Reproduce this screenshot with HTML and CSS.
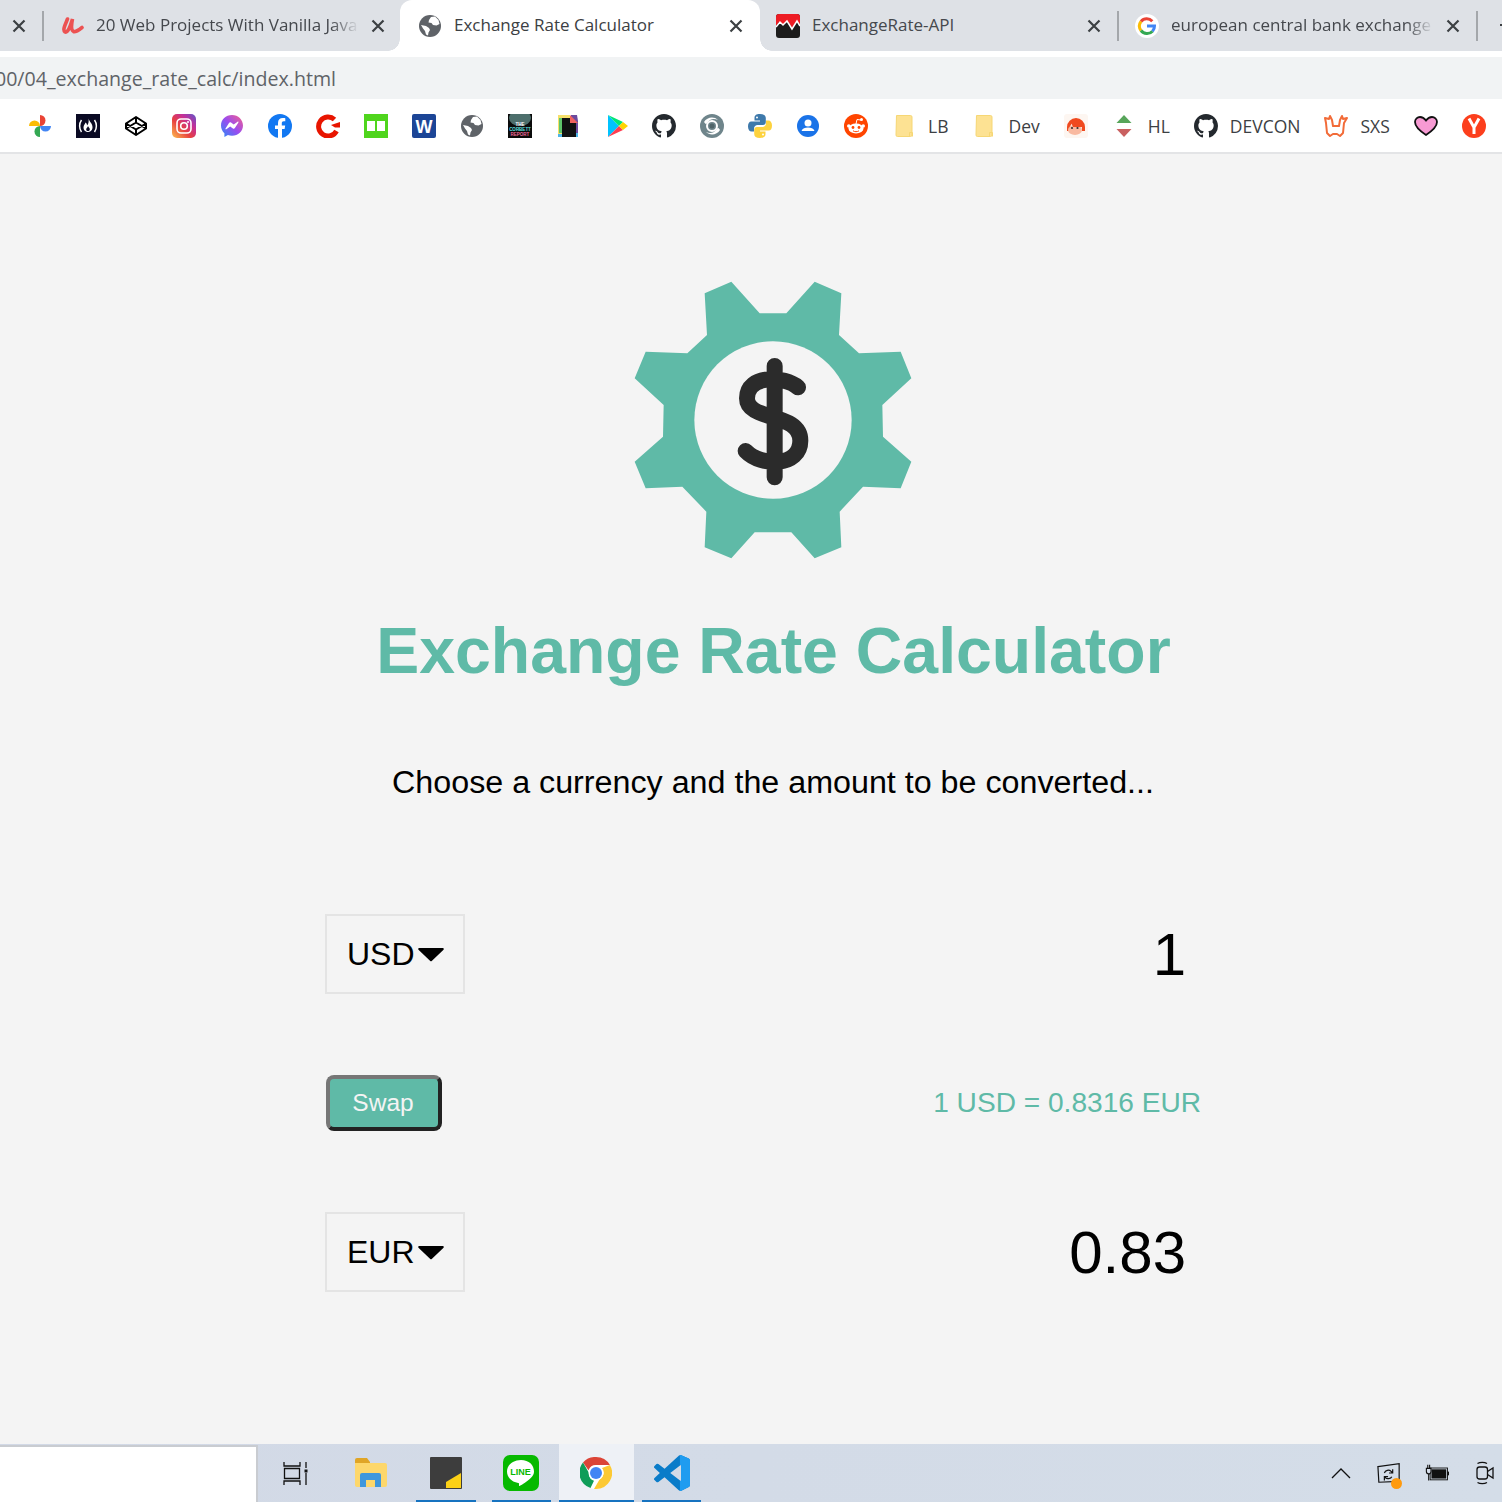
FILE: index.html
```html
<!DOCTYPE html>
<html lang="en">
<head>
    <meta charset="UTF-8">
    <title>Exchange Rate Calculator</title>
    <link rel="stylesheet" href="styles.css">
</head>
<body>

    <!-- shared icons -->
    <svg class="defs" width="0" height="0">
        <symbol id="globe" viewBox="0 0 24 24">
            <circle cx="12" cy="12" r="11" fill="#5f6368"/>
            <path fill="#fff" d="M13 3l4-.5 3.500 3.500 1 4-3 1.500-3.500-.5-1.500-2-3-.5.5-2.500zM3 11l5 1 3 2 1 2-1.500 2.500-.5 3-2-1-1-3.500-2-2.500z"/>
        </symbol>
        <symbol id="github" viewBox="0 0 16 16">
            <path fill="#24292e" d="M8 0C3.58 0 0 3.58 0 8c0 3.54 2.29 6.53 5.47 7.59.4.07.55-.17.55-.38 0-.19-.01-.82-.01-1.49-2.01.37-2.53-.49-2.69-.94-.09-.23-.48-.94-.82-1.13-.28-.15-.68-.52-.01-.53.63-.01 1.08.58 1.23.82.72 1.21 1.87.87 2.33.66.07-.52.28-.87.51-1.07-1.78-.2-3.64-.89-3.64-3.95 0-.87.31-1.59.82-2.15-.08-.2-.36-1.02.08-2.12 0 0 .67-.21 2.2.82.64-.18 1.32-.27 2-.27.68 0 1.36.09 2 .27 1.53-1.04 2.2-.82 2.2-.82.44 1.1.16 1.92.08 2.12.51.56.82 1.27.82 2.15 0 3.07-1.87 3.75-3.65 3.95.29.25.54.73.54 1.48 0 1.07-.01 1.93-.01 2.2 0 .21.15.46.55.38A8.013 8.013 0 0016 8c0-4.42-3.58-8-8-8z"/>
        </symbol>
        <symbol id="folder" viewBox="0 0 24 24">
            <path fill="#fde293" stroke="#f6d775" d="M4.500 1.500h14a1.500 1.500 0 0 1 1.500 1.500v18a1.500 1.500 0 0 1-1.500 1.500h-13a1.500 1.500 0 0 1-1.500-1.500z"/>
            <path fill="none" stroke="#f6d775" d="M17.500 22.500v-4h3v4"/>
        </symbol>
        <symbol id="close" viewBox="0 0 14 14">
            <path fill="none" stroke="#3c4043" stroke-width="2.200" d="M1.500 1.500l11 11M12.500 1.500l-11 11"/>
        </symbol>
    </svg>

    <!-- tab strip -->
    <div class="tabstrip">
        <div class="tab tab-cut">
            <svg class="tab-close"><use href="#close"/></svg>
        </div>
        <div class="sep"></div>
        <div class="tab tab-first">
            <svg class="favicon" viewBox="0 0 24 24"><path fill="none" stroke="#ec5252" stroke-width="3.600" stroke-linecap="round" d="M7.500 5C6 9 2 16 5 18c3 1.500 6-8 7.500-13-1 5-2 11 1 12.500 2 .7 6-2 8.500-4"/></svg>
            <span class="tab-title fade">20 Web Projects With Vanilla Java</span>
            <svg class="tab-close"><use href="#close"/></svg>
        </div>
        <div class="tab active">
            <svg class="favicon"><use href="#globe"/></svg>
            <span class="tab-title">Exchange Rate Calculator</span>
            <svg class="tab-close"><use href="#close"/></svg>
        </div>
        <div class="tab">
            <svg class="favicon" viewBox="0 0 24 24">
                <rect width="24" height="24" rx="3" fill="#1c1c1c"/>
                <path fill="#ed1c24" d="M0 3a3 3 0 0 1 3-3h18a3 3 0 0 1 3 3v9l-3-5-5 7-5-7-4 4-4-3-3 4z"/>
                <path fill="none" stroke="#fff" stroke-width="1.500" d="M0 13l4-5 3 3 4-4 5 8 5-8 3 5"/>
            </svg>
            <span class="tab-title">ExchangeRate-API</span>
            <svg class="tab-close"><use href="#close"/></svg>
        </div>
        <div class="sep"></div>
        <div class="tab">
            <svg class="favicon" viewBox="0 0 24 24">
                <circle cx="12" cy="12" r="12" fill="#fff"/>
                <path fill="none" stroke="#ea4335" stroke-width="3" d="M17.300 7.200A7.500 7.500 0 0 0 6 7.500"/>
                <path fill="none" stroke="#fbbc05" stroke-width="3" d="M6 7.500a7.500 7.500 0 0 0 0 9"/>
                <path fill="none" stroke="#34a853" stroke-width="3" d="M6 16.500a7.500 7.500 0 0 0 11.500 .700"/>
                <path fill="none" stroke="#4285f4" stroke-width="3" d="M17.500 17.200a7.500 7.500 0 0 0 2-5.200H12"/>
            </svg>
            <span class="tab-title fade">european central bank exchange</span>
            <svg class="tab-close"><use href="#close"/></svg>
        </div>
        <div class="sep"></div>
        <div class="new-tab"></div>
    </div>

    <!-- address bar -->
    <div class="addressbar">
        <div class="url">00/04_exchange_rate_calc/index.html</div>
    </div>

    <!-- bookmarks -->
    <div class="bookmarks">
        <div class="bm"><svg class="favicon" viewBox="0 0 24 24">
            <path fill="#fbbc04" d="M1 12a5.500 5.500 0 0 1 11 0z"/>
            <path fill="#ea4335" d="M12 1a5.500 5.500 0 0 1 0 11z"/>
            <path fill="#4285f4" d="M23 12a5.500 5.500 0 0 1-11 0z"/>
            <path fill="#34a853" d="M12 23a5.500 5.500 0 0 1 0-11z"/>
        </svg></div>
        <div class="bm"><svg class="favicon" viewBox="0 0 24 24">
            <rect width="24" height="24" fill="#0a0a23"/>
            <path fill="none" stroke="#fff" stroke-width="1.500" d="M5.500 6c-2.500 3.500-2.500 8.500 0 12M18.500 6c2.500 3.500 2.500 8.500 0 12"/>
            <path fill="#fff" d="M12.500 4.500c.5 3 4.500 5 4 9.500-.3 2.500-2.500 4-4.500 4s-4.500-1.500-4.500-4.500c0-2.500 1.500-3 2-5 1 .5 1.500 1.800 1.500 3 1.500-1.500 2-4.500 1.500-7z"/>
            <path fill="#0a0a23" d="M12 12c.5 1.500 2 2 1.800 3.500-.2 1-1 1.500-1.800 1.500s-1.800-.5-1.800-1.500c0-1.500 1.500-2 1.800-3.500z"/>
        </svg></div>
        <div class="bm"><svg class="favicon" viewBox="0 0 24 24">
            <path fill="none" stroke="#000" stroke-width="2" stroke-linejoin="round" d="M12 3l10 6.500v5L12 21 2 14.500v-5zM12 3v5.500M12 15.500V21M2 9.500l10 6 10-6M2 14.500l10-6 10 6"/>
        </svg></div>
        <div class="bm"><svg class="favicon" viewBox="0 0 24 24">
            <defs><linearGradient id="insta" x1="0" y1="1" x2="1" y2="0">
                <stop offset="0" stop-color="#fdc04f"/><stop offset=".4" stop-color="#e8413f"/><stop offset=".7" stop-color="#c32f9a"/><stop offset="1" stop-color="#5b58c9"/>
            </linearGradient></defs>
            <rect width="24" height="24" rx="5" fill="url(#insta)"/>
            <rect x="5" y="5" width="14" height="14" rx="4" fill="none" stroke="#fff" stroke-width="1.600"/>
            <circle cx="12" cy="12" r="3.300" fill="none" stroke="#fff" stroke-width="1.600"/>
            <circle cx="16" cy="8" r="1" fill="#fff"/>
        </svg></div>
        <div class="bm"><svg class="favicon" viewBox="0 0 24 24">
            <defs><linearGradient id="msgr" x1="0" y1="1" x2="1" y2="0">
                <stop offset="0" stop-color="#2b8cf6"/><stop offset=".5" stop-color="#9a4cf0"/><stop offset="1" stop-color="#f7608a"/>
            </linearGradient></defs>
            <path fill="url(#msgr)" d="M12 1C5.800 1 1 5.500 1 11.500c0 3.100 1.300 5.800 3.400 7.700V23l3.500-1.900c1.300.4 2.700.6 4.100.6 6.200 0 11-4.500 11-10.200S18.200 1 12 1z"/>
            <path fill="#fff" d="M5.500 14.500L9 9c.5-.7 1.400-.9 2-.4l2.700 2 3.900-2.900c.5-.4 1.100.2.800.7L14.900 14c-.5.700-1.400.9-2 .4l-2.700-2-3.900 2.900c-.5.400-1.100-.2-.8-.8z"/>
        </svg></div>
        <div class="bm"><svg class="favicon" viewBox="0 0 24 24">
            <circle cx="12" cy="12" r="12" fill="#1278f2"/>
            <path fill="#fff" d="M10 24v-9H7v-3.500h3V9c0-3.200 1.900-4.900 4.800-4.900 1.400 0 2.500.2 2.500.2v3h-1.500c-1.500 0-2 .9-2 1.900v2.300h3.400l-.6 3.500H14v9z"/>
        </svg></div>
        <div class="bm"><svg class="favicon" viewBox="0 0 24 24">
            <path fill="none" stroke="#e81500" stroke-width="5" d="M18.500 5.500A9.500 9.500 0 1 0 20.500 17"/>
            <path fill="#e81500" d="M15 11l9-3v5.500h-5z"/>
        </svg></div>
        <div class="bm"><svg class="favicon" viewBox="0 0 24 24">
            <rect width="24" height="24" fill="#4fd51d"/>
            <path fill="#fff" d="M3 7h8v10H3zM13 7h8v10h-8z"/>
        </svg></div>
        <div class="bm"><svg class="favicon" viewBox="0 0 24 24">
            <rect width="24" height="24" rx="2" fill="#1c4596"/>
            <text x="12" y="19" class="favicon-letter">W</text>
        </svg></div>
        <div class="bm"><svg class="favicon"><use href="#globe"/></svg></div>
        <div class="bm"><svg class="favicon" viewBox="0 0 24 24">
            <rect width="24" height="24" fill="#0b0b0b"/>
            <ellipse cx="12" cy="4" rx="11" ry="8" fill="#4d6f6c"/>
            <text x="12" y="12" class="tiny tiny-white">THE</text>
            <text x="12" y="17" class="tiny tiny-cyan">CORBETT</text>
            <text x="12" y="22" class="tiny tiny-pink">REPORT</text>
        </svg></div>
        <div class="bm"><svg class="favicon" viewBox="-2 0 24 24">
            <path fill="#6c4a9e" d="M13 1h6l1 6v16H13z"/>
            <path fill="#4fb6e8" d="M0 19h20v4H0z"/>
            <path fill="#f6e06a" d="M0 1h12v3H4v16H0z"/>
            <path fill="#5fc56b" d="M1 4h3v15H1z"/>
            <path fill="#111" d="M4 4h8v5h6v14H4z"/>
            <path fill="#f0625f" d="M12 1l8 8h-8z"/>
        </svg></div>
        <div class="bm"><svg class="favicon" viewBox="0 0 24 24">
            <path fill="#00c3ff" d="M4 1v22l11-11z"/>
            <path fill="#00e676" d="M4 1l11 11 4-4z"/>
            <path fill="#ff3d50" d="M4 23l11-11 4 4z"/>
            <path fill="#ffd400" d="M15 12l4-4 5 4-5 4z"/>
        </svg></div>
        <div class="bm"><svg class="favicon"><use href="#github"/></svg></div>
        <div class="bm"><svg class="favicon" viewBox="0 0 24 24">
            <circle cx="12" cy="12" r="12" fill="#6f858b"/>
            <path fill="#fff" d="M4 8c3-5 10-6 14-2-4-2-8-1-10 2-1.500 2-2 3-4 0zM20 16c-3 5-10 6-14 2 4 2 8 1 10-2 1.500-2 2-3 4 0z"/>
            <circle cx="12" cy="12" r="5" fill="none" stroke="#fff" stroke-width="2"/>
            <circle cx="12" cy="12" r="2.500" fill="#4f6469"/>
        </svg></div>
        <div class="bm"><svg class="favicon" viewBox="0 0 24 24">
            <path fill="#3e79ab" d="M12 0C8 0 6.500 1.500 6.500 4v2.500H12v1H3.500C1 7.500 0 9.500 0 12.500s1.500 5 3.500 5H6v-3c0-2.200 1.800-3.500 3.500-3.500h5.500c1.700 0 2.800-1.300 2.800-3V4c0-2.500-2-4-5.800-4z"/>
            <path fill="#fdd23e" d="M12 24c4 0 5.500-1.500 5.500-4v-2.500H12v-1h8.500c2.500 0 3.500-2 3.500-5s-1.500-5-3.500-5H18v3c0 2.200-1.800 3.500-3.500 3.500H9c-1.700 0-2.800 1.300-2.800 3V20c0 2.500 2 4 5.800 4z"/>
            <circle cx="9" cy="3.500" r="1" fill="#fff"/>
            <circle cx="15" cy="20.500" r="1" fill="#fff"/>
        </svg></div>
        <div class="bm"><svg class="favicon" viewBox="0 0 24 24">
            <circle cx="12" cy="12" r="11" fill="#1a73e8"/>
            <circle cx="12" cy="9" r="3.500" fill="#fff"/>
            <path fill="#fff" d="M5.500 17c1-2.700 3.500-3.500 6.500-3.500s5.500.8 6.500 3.500z"/>
        </svg></div>
        <div class="bm"><svg class="favicon" viewBox="0 0 24 24">
            <circle cx="12" cy="12" r="12" fill="#ff4500"/>
            <ellipse cx="12" cy="14.500" rx="7.500" ry="5" fill="#fff"/>
            <circle cx="4.800" cy="12" r="1.800" fill="#fff"/>
            <circle cx="19.200" cy="12" r="1.800" fill="#fff"/>
            <circle cx="17.500" cy="5.500" r="1.500" fill="#fff"/>
            <path fill="none" stroke="#fff" stroke-width="1" d="M12 10l1-4.500 4 .5"/>
            <circle cx="9" cy="13.500" r="1.400" fill="#ff4500"/>
            <circle cx="15" cy="13.500" r="1.400" fill="#ff4500"/>
            <path fill="none" stroke="#ff4500" stroke-width="1" d="M9 16.800c1.800 1.200 4.200 1.200 6 0"/>
        </svg></div>
        <div class="bm"><svg class="favicon"><use href="#folder"/></svg><span class="bm-label">LB</span></div>
        <div class="bm"><svg class="favicon"><use href="#folder"/></svg><span class="bm-label">Dev</span></div>
        <div class="bm"><svg class="favicon" viewBox="0 0 24 24">
            <rect width="24" height="24" rx="3" fill="#fdf6f1"/>
            <path fill="#f04a1f" d="M3 13a9 9 0 0 1 18 0v4h-3v-3a6 6 0 0 0-12 0v3H3z"/>
            <ellipse cx="11" cy="16" rx="7" ry="5" fill="#f9b9a0"/>
            <circle cx="8" cy="14" r="1.100" fill="#333"/>
            <circle cx="13.500" cy="14" r="1.100" fill="#333"/>
            <path fill="#f04a1f" d="M7 8h10l3 5H9z"/>
        </svg></div>
        <div class="bm"><svg class="favicon" viewBox="0 0 24 24">
            <path fill="#57a55a" d="M12 1l7.500 8h-15z"/>
            <path fill="#c96060" d="M4.500 15h15L12 23z"/>
        </svg><span class="bm-label">HL</span></div>
        <div class="bm"><svg class="favicon"><use href="#github"/></svg><span class="bm-label">DEVCON</span></div>
        <div class="bm"><svg class="favicon" viewBox="0 0 24 24">
            <path fill="#fff" stroke="#f26b38" stroke-width="2" stroke-linejoin="round" d="M1 4l4 1 1-3 2 4 1 6h6l1-6 2-4 1 3 4-1-3 5-1 10-3 3-3-2h-4l-3 2-3-3-1-10z"/>
        </svg><span class="bm-label">SXS</span></div>
        <div class="bm"><svg class="favicon" viewBox="0 0 24 24">
            <path fill="#f79ad3" stroke="#111" stroke-width="1.800" d="M12 21C6 17 1 13 1 8c0-3 2.500-5 5-5 2.700 0 4.500 1.500 6 3.500C13.500 4.500 15.300 3 18 3c2.500 0 5 2 5 5 0 5-5 9-11 13z"/>
        </svg></div>
        <div class="bm"><svg class="favicon" viewBox="0 0 24 24">
            <circle cx="12" cy="12" r="12" fill="#fc3f1d"/>
            <path fill="none" stroke="#fff" stroke-width="3" d="M7 4.500l5 9 5-9M12 13v7"/>
        </svg></div>
    </div>

    <!-- page -->
    <main class="page">
        <svg class="logo" viewBox="10 0 900 900">
            <path fill="#5fbaa7" d="M335 35L420 130H500L585 35L665 70L658 195L718 250L843 245L875 325L788 405L790 500L875 575L843 655L730 650L660 725L665 832L585 865L515 787H405L335 865L255 832L260 725L188 650L78 655L45 575L130 500L132 405L45 325L78 245L203 250L262 195L255 70Z"/>
            <circle cx="460" cy="450" r="236" fill="#f4f4f4"/>
            <path fill="none" stroke="#2b2b2b" stroke-width="48" stroke-linecap="round" d="M465 288V622M535 352C495 318 382 312 382 385C382 455 542 425 542 512C542 590 425 592 378 543"/>
        </svg>

        <h1 class="title">Exchange Rate Calculator</h1>
        <p class="lead">Choose a currency and the amount to be converted...</p>

        <div class="calc">
            <div class="row">
                <div class="currency">USD<svg class="caret" viewBox="0 0 24 14"><path d="M1 1h22a1 1 0 0 1 .7 1.500L12.700 13a1 1 0 0 1-1.400 0L.3 2.500A1 1 0 0 1 1 1z"/></svg></div>
                <input class="amount" type="text" value="1">
            </div>
            <div class="row row-swap">
                <button class="swap">Swap</button>
                <div class="rate">1 USD = 0.8316 EUR</div>
            </div>
            <div class="row">
                <div class="currency">EUR<svg class="caret" viewBox="0 0 24 14"><path d="M1 1h22a1 1 0 0 1 .7 1.500L12.700 13a1 1 0 0 1-1.400 0L.3 2.500A1 1 0 0 1 1 1z"/></svg></div>
                <input class="amount" type="text" value="0.83">
            </div>
        </div>
    </main>

    <!-- taskbar -->
    <div class="taskbar">
        <div class="searchbox"></div>
        <div class="task"><svg class="task-icon" viewBox="0 0 32 32" fill="none" stroke="#111" stroke-width="1.300">
            <path d="M4 5v4h16V5M4.500 11.500h15v10h-15zM4 28v-4h16v4M26 5v6M26 16v12"/>
            <rect x="24.500" y="12.500" width="3" height="3" fill="#111" stroke="none"/>
        </svg></div>
        <div class="task"><svg class="task-icon" viewBox="0 0 32 32">
            <path fill="#e0a526" d="M0 3a2 2 0 0 1 2-2h10l3 4v4H0z"/>
            <path fill="#fdd76b" d="M0 6h30a2 2 0 0 1 2 2v20a2 2 0 0 1-2 2H2a2 2 0 0 1-2-2z"/>
            <path fill="#3f97dc" d="M5 30V18a2 2 0 0 1 2-2h17a2 2 0 0 1 2 2v12h-6v-7h-9v7z"/>
        </svg></div>
        <div class="task open"><svg class="task-icon" viewBox="0 0 32 32">
            <rect width="32" height="32" rx="1" fill="#3d3d3d"/>
            <path fill="#fcd116" d="M16 31v-6l15-9v15z"/>
        </svg></div>
        <div class="task open"><svg class="task-icon task-line" viewBox="0 0 36 36">
            <rect width="36" height="36" rx="7" fill="#06b900"/>
            <path fill="#fff" d="M18 5C10 5 4 10 4 16.500c0 5.800 4.700 10.500 11.200 11.400.9.200 1 .7.800 1.600 0 .7-.3 2 1 1.300 1.500-.7 8-4.700 11-8 2-2 3-4 3-6.300C31 10 26 5 18 5z"/>
            <text x="17.500" y="20" class="favicon-letter line-word">LINE</text>
        </svg></div>
        <div class="task open current"><svg class="task-icon" viewBox="0 0 32 32">
            <circle cx="16" cy="16" r="16" fill="#fff"/>
            <path fill="#db4437" d="M16 0a16 16 0 0 1 13.900 8H16a8 8 0 0 0-7.500 5.200L3 5.500A16 16 0 0 1 16 0z"/>
            <path fill="#0f9d58" d="M3 5.500l6 10.500a7.500 7.500 0 0 0 5 7.800L10.500 31A16 16 0 0 1 3 5.500z"/>
            <path fill="#fcc934" d="M29.900 8A16 16 0 0 1 16 32h-2l5.500-9.500A7.500 7.500 0 0 0 22 11z"/>
            <circle cx="16" cy="16" r="7.500" fill="#fff"/>
            <circle cx="16" cy="16" r="6" fill="#4285f4"/>
        </svg></div>
        <div class="task open"><svg class="task-icon task-line" viewBox="0 0 100 100">
            <defs><clipPath id="vscode"><path clip-rule="evenodd" d="M70.912 99.317c1.575.614 3.371.575 4.961-.19l20.588-9.907A7 7 0 0 0 100 83.587V16.413a7 7 0 0 0-3.539-6.633L75.873.874a7 7 0 0 0-6.359.573c-.262.19-.511.402-.745.636L29.355 38.042 12.187 25.010a4.600 4.600 0 0 0-5.318.236l-5.506 5.009a4.600 4.600 0 0 0-.004 6.162L16.247 50 1.359 63.583a4.600 4.600 0 0 0 .004 6.162l5.506 5.009a4.600 4.600 0 0 0 5.318.236l17.168-13.032 39.414 35.958c.624.624 1.356 1.094 2.143 1.401zM75.015 27.299L45.109 50l29.906 22.701z"/></clipPath></defs>
            <g clip-path="url(#vscode)">
                <rect width="100" height="100" fill="#0a7cc9"/>
                <rect x="72" width="28" height="100" fill="#1f9cf0"/>
            </g>
        </svg></div>
        <div class="tray">
            <div class="tray-item"><svg class="tray-icon" viewBox="0 0 24 24" fill="none" stroke="#111" stroke-width="1.300"><path d="M3 17l9-9 9 9"/></svg></div>
            <div class="tray-item has-badge"><svg class="tray-icon" viewBox="0 0 26 24" fill="none" stroke="#111" stroke-width="1.300">
                <path d="M1 5l23-3v19L2 22zM8 12c1-3 5-4 7-2l2 2M17 8v4h-4M16 16c-1 2-5 3-7 1l-1-1M8 20v-4h4"/>
            </svg><span class="tray-badge"></span></div>
            <div class="tray-item"><svg class="tray-icon" viewBox="0 0 26 24">
                <rect x="5.600" y="6.600" width="18.800" height="12.800" fill="none" stroke="#111" stroke-width="1"/>
                <rect x="7" y="8" width="16" height="10" fill="#111"/>
                <rect x="24.500" y="10.500" width="1.500" height="4" fill="#111"/>
                <path fill="#d3dbe7" stroke="#111" stroke-width="1.200" d="M1.500 7v3.500a2.500 2.500 0 0 0 5 0V7z"/>
                <path fill="none" stroke="#111" stroke-width="1.200" d="M3 7V3M5 7V3M4 13v7"/>
            </svg></div>
            <div class="tray-item"><svg class="tray-icon" viewBox="0 0 24 24" fill="none" stroke="#111" stroke-width="1.300">
                <rect x="4" y="6" width="10.500" height="12" rx="2.500"/>
                <path d="M14.500 10.500l5.500-3.500v10l-5.500-3.500M4.500 2.500c2.500-1.500 7-1.500 9.500 0M4.500 21.500c2.500 1.500 7 1.500 9.500 0"/>
            </svg></div>
        </div>
    </div>

</body>
</html>
```

FILE: styles.css
```css
* { box-sizing: border-box; }
html, body { margin: 0; height: 100%; }
body { display: flex; flex-direction: column; height: 1502px; overflow: hidden; font-family: "Liberation Sans", Arial, sans-serif; background: #f4f4f4; }
.defs { position: absolute; }

/* browser chrome */
.tabstrip { display: flex; align-items: stretch; height: 51px; background: #dee1e6; font-family: "Open Sans", sans-serif; font-size: 17px; color: #45484d; }
.tab { position: relative; flex: 1 1 0; min-width: 0; display: flex; align-items: center; gap: 12px; padding: 0 16px 0 16px; }
.tab-cut { flex: none; width: 42px; padding: 0 16px 0 0; justify-content: flex-end; }
.tab-first { flex: none; width: 356px; padding-right: 15px; }
.tab-title { flex: 1; min-width: 0; white-space: nowrap; overflow: hidden; padding-bottom: 2px; }
.fade { -webkit-mask-image: linear-gradient(to right, #000 calc(100% - 28px), transparent); mask-image: linear-gradient(to right, #000 calc(100% - 28px), transparent); }
.tab-close { flex: none; width: 14px; height: 14px; }
.favicon { flex: none; width: 24px; height: 24px; }
.sep { flex: none; width: 2px; height: 30px; margin-top: 11px; background: #a4a7ab; }
.new-tab { flex: none; width: 24px; position: relative; }
.new-tab::after { content: ""; position: absolute; right: 0; top: 24px; width: 2px; height: 2px; background: #3c4043; }

.active { flex: none; width: 360px; height: 57px; background: #fff; border-radius: 12px 12px 0 0; color: #3c4043; padding: 0 17px 6px 18px; z-index: 1; }
.active::before, .active::after { content: ""; position: absolute; bottom: 6px; width: 12px; height: 12px; }
.active::before { left: -12px; background: radial-gradient(circle at 0 0, transparent 11.500px, #fff 12px); }
.active::after { right: -12px; background: radial-gradient(circle at 100% 0, transparent 11.500px, #fff 12px); }

.addressbar { height: 48px; border-top: 6px solid #fff; background: #f1f3f4; display: flex; align-items: center; font-family: "Open Sans", sans-serif; font-size: 19.600px; color: #5f6368; }
.url { width: 336px; display: flex; justify-content: flex-end; overflow: hidden; white-space: nowrap; }

.bookmarks { display: flex; align-items: center; height: 55px; padding-left: 16px; background: #fff; border-bottom: 2px solid #e3e4e6; font-family: "Open Sans", sans-serif; font-size: 17.500px; color: #3c4043; }
.bm { flex: none; display: flex; align-items: center; gap: 12px; padding: 0 12px; }
.bm-label { white-space: nowrap; }
.favicon-letter { font-family: "Liberation Sans", sans-serif; font-weight: bold; font-size: 18px; fill: #fff; text-anchor: middle; }
.line-word { font-size: 9px; fill: #06b900; }
.tiny { font-family: "Liberation Sans", sans-serif; font-weight: bold; font-size: 4.500px; text-anchor: middle; }
.tiny-white { fill: #fff; }
.tiny-cyan { fill: #5fe0e0; }
.tiny-pink { fill: #f06a9a; }

/* calculator page */
.page { flex: 1; min-height: 0; display: flex; flex-direction: column; align-items: center; padding: 116px 0 0 44px; background: #f4f4f4; }
.logo { width: 300px; height: 300px; }
.title { margin: 41px 0 0 1px; font-size: 64.400px; line-height: 80px; font-weight: bold; color: #5fbaa7; white-space: nowrap; }
.lead { margin: 71px 0 0; font-size: 32.250px; line-height: 40px; color: #000; white-space: nowrap; }
.calc { width: 896px; margin-top: 112px; }
.row { display: flex; align-items: center; justify-content: space-between; height: 80px; }
.row-swap { height: 56px; margin: 81px 0 81px; padding: 0 20px 0 1px; }
.currency { display: flex; align-items: center; width: 140px; height: 80px; padding-left: 20px; border: 2px solid #e4e4e4; font-size: 32px; color: #000; }
.caret { width: 26px; height: 15px; margin-left: 3px; }
.amount { width: 500px; height: 80px; padding: 0 35px 0 0; border: 0; background: transparent; outline: 0; text-align: right; font-family: inherit; font-size: 60px; color: #000; }
.swap { width: 116px; height: 56px; padding: 0 2px 0 0; border: 4px solid; border-color: #767676 #222 #222 #767676; border-radius: 8px; background: #5fbaa7; color: #f4f4f4; font-family: inherit; font-size: 24.500px; }
.rate { font-size: 28.100px; line-height: 58px; color: #5fbaa7; white-space: nowrap; }

/* windows taskbar */
.taskbar { height: 58px; display: flex; align-items: stretch; background: linear-gradient(to right, #d2d9e6, #d4dde8); }
.searchbox { flex: none; width: 258px; margin-top: 1px; background: #fff; border-top: 2px solid #c9ccd1; border-right: 2px solid #c9ccd1; }
.task { position: relative; flex: none; width: 75.200px; display: flex; align-items: center; justify-content: center; }
.task.open::after { content: ""; position: absolute; left: 8px; right: 8px; bottom: 0; height: 2px; background: #1673c0; }
.task.current { background: #eef1f6; }
.task.current::after { left: 0; right: 0; }
.task-icon { width: 32px; height: 32px; }
.task-line { width: 36px; height: 36px; }
.tray { margin-left: auto; margin-right: -7px; display: flex; align-items: center; }
.tray-item { position: relative; width: 48px; display: flex; justify-content: center; }
.tray-icon { width: 24px; height: 24px; }
.tray-badge { position: absolute; right: 11px; bottom: -4px; width: 11px; height: 11px; border-radius: 50%; background: #ff9a0d; }
```
